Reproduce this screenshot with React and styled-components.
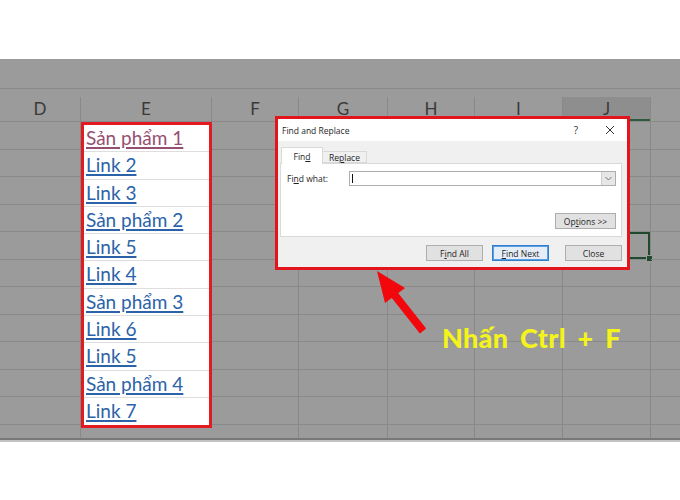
import React from "react";
import styled, { createGlobalStyle } from "styled-components";

const GlobalStyle = createGlobalStyle`
  html, body {
    margin: 0;
    padding: 0;
    background: #fff;
  }
  body {
    width: 680px;
    height: 500px;
    overflow: hidden;
    font-family: "Open Sans", "Noto Sans", sans-serif;
  }
`;

const GRID_BG = "#9b9b9b";
const GRID_LINE = "#898989";
const ROW_H = 27.5;

const COLUMNS = [
  { key: "D", width: 81 },
  { key: "E", width: 131, highlight: true },
  { key: "F", width: 87 },
  { key: "G", width: 89 },
  { key: "H", width: 87 },
  { key: "I", width: 88 },
  { key: "J", width: 88, active: true },
  { key: "K", width: 60 },
];

const LINKS = [
  { text: "Sản phẩm 1", visited: true },
  { text: "Link 2" },
  { text: "Link 3" },
  { text: "Sản phẩm 2" },
  { text: "Link 5" },
  { text: "Link 4" },
  { text: "Sản phẩm 3" },
  { text: "Link 6" },
  { text: "Link 5" },
  { text: "Sản phẩm 4" },
  { text: "Link 7" },
];

const Page = styled.div`
  position: relative;
  width: 680px;
  height: 500px;
  padding-top: 59px;
  box-sizing: border-box;
  background: #fff;
`;

const Sheet = styled.div`
  background: ${GRID_BG};
`;

const FormulaBand = styled.div`
  height: 29px;
  border-bottom: 1px solid ${GRID_LINE};
`;

const HeaderRow = styled.div`
  display: flex;
  height: 25px;
  margin-top: 8px;
  box-sizing: border-box;
  border-bottom: 1px solid ${GRID_LINE};
`;

const HeaderCell = styled.div`
  flex: none;
  width: ${(p) => p.$width}px;
  box-sizing: border-box;
  border-right: 1px solid ${GRID_LINE};
  text-align: center;
  font-family: Lato, "Open Sans", sans-serif;
  font-size: 17px;
  line-height: 24px;
  color: #3a3a3a;
  background: ${(p) => (p.$active ? "#8e8e8e" : "transparent")};
  box-shadow: ${(p) => (p.$active ? "inset 0 -2px 0 #2b5a3c" : "none")};
`;

const Body = styled.div`
  display: flex;
  align-items: flex-start;
  height: 316px;
  overflow: hidden;
`;

const GridColumn = styled.div`
  flex: none;
  width: ${(p) => p.$width}px;
  box-sizing: border-box;
  border-right: 1px solid ${GRID_LINE};
`;

const GridCell = styled.div`
  position: relative;
  height: ${ROW_H}px;
  box-sizing: border-box;
  border-bottom: 1px solid ${GRID_LINE};
  box-shadow: ${(p) => (p.$selected ? "inset 0 0 0 2px #1f4a30" : "none")};

  ${(p) =>
    p.$selected &&
    `
    &::after {
      content: "";
      position: absolute;
      right: -3px;
      bottom: -3px;
      width: 5px;
      height: 5px;
      background: #1f4a30;
      border: 1px solid #9b9b9b;
    }
  `}
`;

const LinkColumn = styled.div`
  flex: none;
  width: 131px;
  box-sizing: border-box;
  border: 3px solid #e31b20;
  background: #fff;
`;

const LinkCell = styled.div`
  height: 27.3px;
  box-sizing: border-box;
  padding-left: 2px;
  border-bottom: 1px solid #dedede;
  font-family: Lato, "Open Sans", sans-serif;
  font-size: 19px;
  line-height: 26px;
  white-space: nowrap;

  &:last-child {
    border-bottom: none;
  }
`;

const CellLink = styled.a`
  color: ${(p) => (p.$visited ? "#954f72" : "#2c63a8")};
  text-decoration: underline;
  text-decoration-thickness: 1.5px;
  text-underline-offset: 2px;
`;

const SheetEdge = styled.div`
  height: 4px;
  box-sizing: border-box;
  border-top: 2px solid #777;
  background: #c2c2c2;
`;

/* Find and Replace dialog, lying over the grid */
const Dialog = styled.div`
  position: absolute;
  left: 275px;
  top: 116px;
  width: 355px;
  height: 154px;
  box-sizing: border-box;
  border: 3px solid #e2151c;
  background: #f0f0f0;
  display: flex;
  flex-direction: column;
  font-size: 8.5px;
  color: #1e1e1e;
`;

const TitleBar = styled.div`
  display: flex;
  align-items: center;
  height: 22px;
  padding-left: 4px;
  background: #fff;
`;

const Title = styled.div`
  flex: 1;
`;

const TitleButton = styled.div`
  width: 34px;
  height: 22px;
  display: flex;
  align-items: center;
  justify-content: center;
  font-size: 10px;
  color: #333;
`;

const TabStrip = styled.div`
  display: flex;
  align-items: flex-end;
  height: 16px;
  margin-top: 6px;
  padding-left: 3px;
`;

const Tab = styled.div`
  position: relative;
  box-sizing: border-box;
  width: ${(p) => (p.$active ? 42 : 44)}px;
  height: ${(p) => (p.$active ? 17 : 12)}px;
  margin-bottom: ${(p) => (p.$active ? -1 : 0)}px;
  padding-top: ${(p) => (p.$active ? 3 : 0)}px;
  text-align: center;
  line-height: 11px;
  background: ${(p) => (p.$active ? "#fff" : "#f0f0f0")};
  border: 1px solid #d9d9d9;
  border-bottom: ${(p) => (p.$active ? "none" : "1px solid #d9d9d9")};
  border-left: ${(p) => (p.$active ? "1px solid #d9d9d9" : "none")};
  z-index: ${(p) => (p.$active ? 1 : 0)};
`;

const Panel = styled.div`
  height: 74px;
  margin: 0 5px 0 2px;
  box-sizing: border-box;
  padding: 7px 5px 0 6px;
  background: #fff;
  border: 1px solid #d9d9d9;
  display: flex;
  flex-direction: column;
`;

const FieldRow = styled.div`
  display: flex;
  align-items: center;
  height: 15px;
`;

const FieldLabel = styled.div`
  width: 62px;
  flex: none;
`;

const Combo = styled.div`
  flex: 1;
  display: flex;
  height: 15px;
  box-sizing: border-box;
  border: 1px solid #abadb3;
  background: #fff;
`;

const ComboText = styled.div`
  flex: 1;
  display: flex;
  align-items: center;
  padding-left: 2px;
`;

const Caret = styled.span`
  width: 1px;
  height: 9px;
  background: #111;
`;

const DropButton = styled.div`
  width: 13px;
  display: flex;
  align-items: center;
  justify-content: center;
  background: #e6e6e6;
  border-left: 1px solid #cfcfcf;
`;

const OptionsRow = styled.div`
  display: flex;
  justify-content: flex-end;
  margin-top: 27px;
`;

const ButtonRow = styled.div`
  display: flex;
  justify-content: flex-end;
  margin-top: 8px;
  padding-right: 5px;
`;

const DialogButton = styled.div`
  width: ${(p) => p.$width || 57}px;
  height: 16px;
  margin-left: ${(p) => p.$gap || 0}px;
  box-sizing: border-box;
  display: flex;
  align-items: center;
  justify-content: center;
  background: ${(p) => (p.$primary ? "#e5edf6" : "#e1e1e1")};
  border: 1px solid ${(p) => (p.$primary ? "#2f7fd0" : "#adadad")};
  box-shadow: ${(p) => (p.$primary ? "inset 0 0 0 1px #5c9ee0" : "none")};
`;

const Callout = styled.div`
  position: absolute;
  left: 442px;
  top: 322px;
  font-family: Lato, "DejaVu Sans", sans-serif;
  font-weight: 900;
  font-size: 27px;
  line-height: 32px;
  letter-spacing: 0.3px;
  word-spacing: 5px;
  color: #f4f41c;
  white-space: nowrap;
`;

const ArrowSvg = styled.svg`
  position: absolute;
  left: 360px;
  top: 260px;
`;

function CloseGlyph() {
  return (
    <svg width="10" height="10" viewBox="0 0 10 10">
      <path d="M1 1 L9 9 M9 1 L1 9" stroke="#333" strokeWidth="1" fill="none" />
    </svg>
  );
}

function Chevron() {
  return (
    <svg width="7" height="5" viewBox="0 0 7 5">
      <path d="M0.5 1 L3.5 4 L6.5 1" stroke="#666" strokeWidth="0.9" fill="none" />
    </svg>
  );
}

function FindReplaceDialog() {
  return (
    <Dialog>
      <TitleBar>
        <Title>Find and Replace</Title>
        <TitleButton>?</TitleButton>
        <TitleButton>
          <CloseGlyph />
        </TitleButton>
      </TitleBar>
      <TabStrip>
        <Tab $active>
          Fin<u>d</u>
        </Tab>
        <Tab>
          Re<u>p</u>lace
        </Tab>
      </TabStrip>
      <Panel>
        <FieldRow>
          <FieldLabel>
            Fi<u>n</u>d what:
          </FieldLabel>
          <Combo>
            <ComboText>
              <Caret />
            </ComboText>
            <DropButton>
              <Chevron />
            </DropButton>
          </Combo>
        </FieldRow>
        <OptionsRow>
          <DialogButton $width={61}>
            Op<u>t</u>ions &gt;&gt;
          </DialogButton>
        </OptionsRow>
      </Panel>
      <ButtonRow>
        <DialogButton>
          F<u>i</u>nd All
        </DialogButton>
        <DialogButton $primary $gap={9}>
          <u>F</u>ind Next
        </DialogButton>
        <DialogButton $gap={16}>Close</DialogButton>
      </ButtonRow>
    </Dialog>
  );
}

export default function App() {
  const rows = Array.from({ length: 12 }, (_, i) => i);
  return (
    <Page>
      <GlobalStyle />
      <Sheet>
        <FormulaBand />
        <HeaderRow>
          {COLUMNS.map((c) => (
            <HeaderCell key={c.key} $width={c.width} $active={c.active}>
              {c.key === "K" ? "" : c.key}
            </HeaderCell>
          ))}
        </HeaderRow>
        <Body>
          {COLUMNS.map((c) =>
            c.highlight ? (
              <LinkColumn key={c.key}>
                {LINKS.map((l, i) => (
                  <LinkCell key={i}>
                    <CellLink $visited={l.visited}>{l.text}</CellLink>
                  </LinkCell>
                ))}
              </LinkColumn>
            ) : (
              <GridColumn key={c.key} $width={c.width}>
                {rows.map((r) => (
                  <GridCell key={r} $selected={c.active && r === 4} />
                ))}
              </GridColumn>
            )
          )}
        </Body>
        <SheetEdge />
      </Sheet>

      <FindReplaceDialog />

      <ArrowSvg width="80" height="80" viewBox="0 0 80 80">
        <polygon points="17,11 25,43 45,28" fill="#f2070d" />
        <line x1="33" y1="33" x2="63" y2="71" stroke="#f2070d" strokeWidth="8" />
      </ArrowSvg>

      <Callout>Nhấn Ctrl + F</Callout>
    </Page>
  );
}
